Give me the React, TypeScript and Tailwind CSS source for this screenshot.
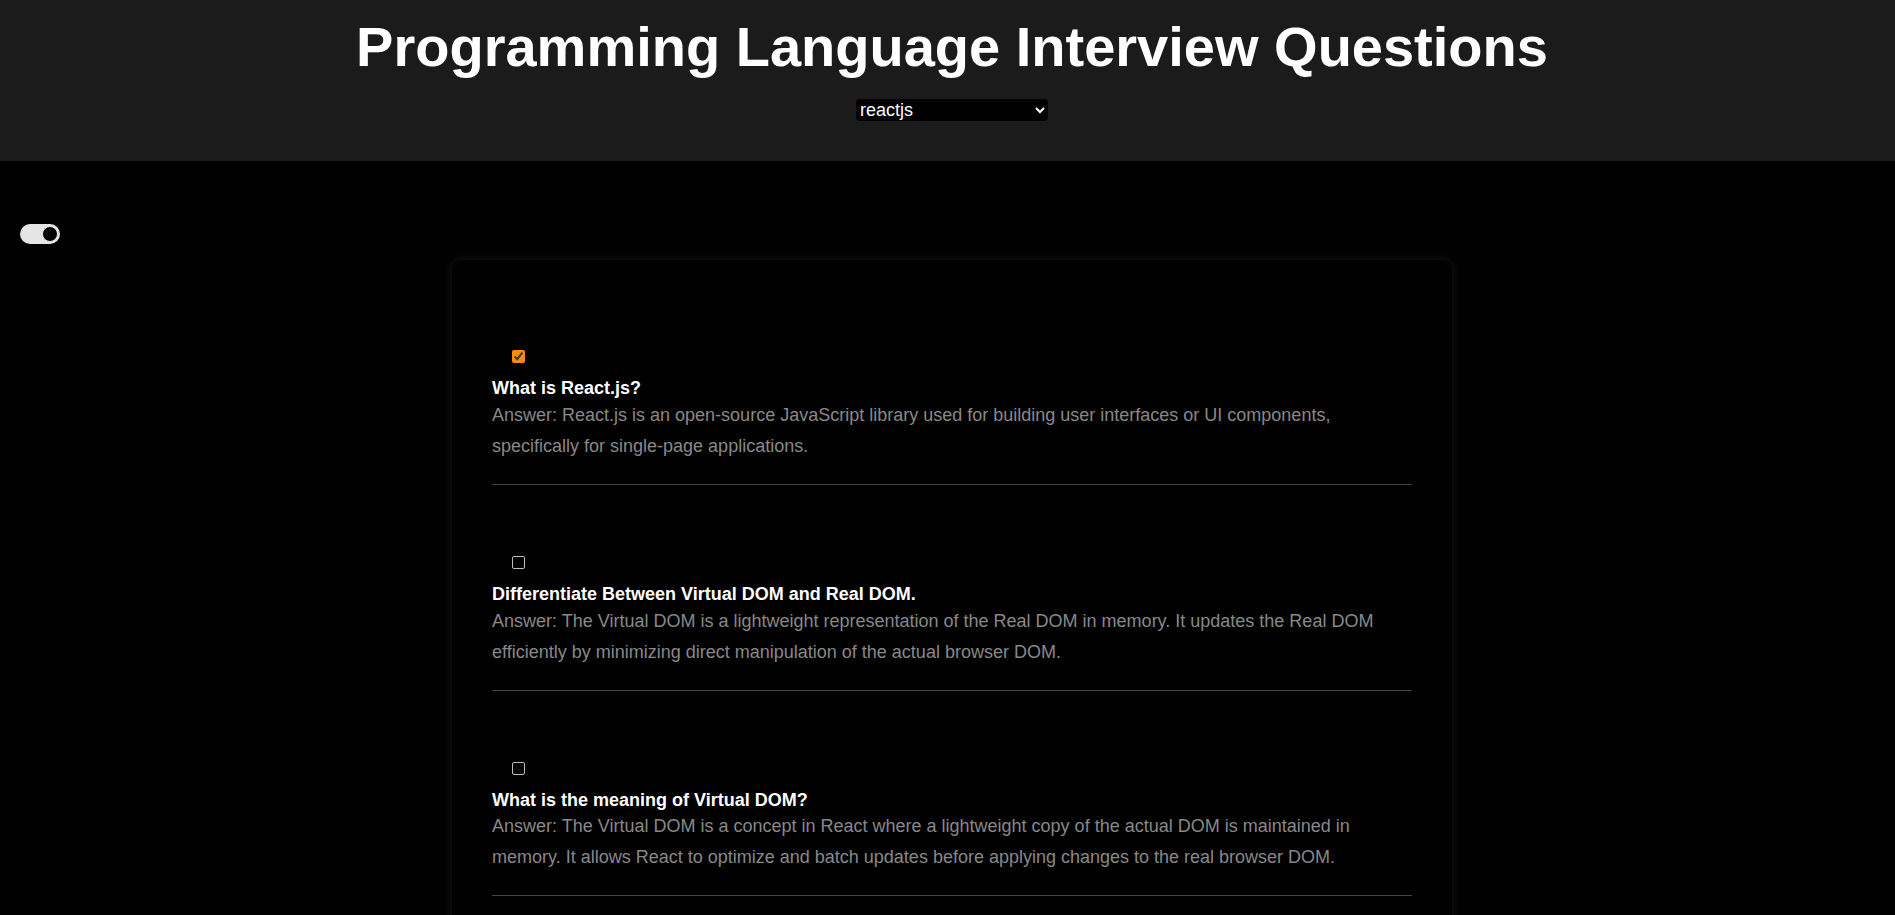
import {FC, useState} from 'react';

type Question = {
  id: number;
  question: string;
  answer: string;
};

const questions: Question[] = [
  {
    id: 1,
    question: 'What is React.js?',
    answer:
      'React.js is an open-source JavaScript library used for building user interfaces or UI components, specifically for single-page applications.',
  },
  {
    id: 2,
    question: 'Differentiate Between Virtual DOM and Real DOM.',
    answer:
      'The Virtual DOM is a lightweight representation of the Real DOM in memory. It updates the Real DOM efficiently by minimizing direct manipulation of the actual browser DOM.',
  },
  {
    id: 3,
    question: 'What is the meaning of Virtual DOM?',
    answer:
      'The Virtual DOM is a concept in React where a lightweight copy of the actual DOM is maintained in memory. It allows React to optimize and batch updates before applying changes to the real browser DOM.',
  },
  {
    id: 4,
    question: 'What are the features of React?',
    answer:
      'React uses JSX, a virtual DOM, one-way data binding and a component based architecture that makes code reusable and easy to test.',
  },
];

const App: FC = () => {
  const [language, setLanguage] = useState('reactjs');
  const [dark, setDark] = useState(true);
  const [done, setDone] = useState<number[]>([1]);

  // toggle a question as read
  const toggleDone = (id: number): void => {
    setDone(prev => (prev.includes(id) ? prev.filter(i => i !== id) : [...prev, id]));
  };

  return (
    <div className="min-h-screen bg-black font-['Liberation_Sans',Arial,sans-serif] [color-scheme:dark]">
      <header className="bg-[#1b1b1b] pt-[15px] pb-[40px] pl-[9px] flex flex-col items-center">
        <h1 className="text-white text-[56px] font-bold leading-[1.15]">
          Programming Language Interview Questions
        </h1>
        <select
          className="mt-[20px] w-[192px] h-[22px] bg-black text-white text-[18px] leading-none rounded-[4px] outline-none"
          value={language}
          onChange={e => setLanguage(e.target.value)}>
          <option value="reactjs">reactjs</option>
          <option value="javascript">javascript</option>
          <option value="python">python</option>
          <option value="java">java</option>
        </select>
      </header>

      <div className="pt-[63px] pl-[20px]">
        <button
          type="button"
          onClick={() => setDark(!dark)}
          className={`w-[40px] h-[20px] rounded-full bg-[#e5e5e5] flex items-center px-[2px] cursor-pointer ${
            dark ? 'justify-end' : 'justify-start'
          }`}>
          <span className="w-[16px] h-[16px] rounded-full bg-black border border-[#e5e5e5]" />
        </button>
      </div>

      <main className="pl-[9px] pt-[16px]">
        <div className="w-[1000px] mx-auto bg-black rounded-[10px] px-[40px] pt-[40px] shadow-[0_0_8px_2px_rgba(255,255,255,0.07)]">
          {questions.map(q => (
            <div key={q.id} className="pt-[50px] pb-[22px] mb-[21px] border-b border-[#444] flex flex-col items-start">
              <input
                type="checkbox"
                className="ml-[20px] w-[13px] h-[13px] m-0 appearance-none checked:appearance-auto border border-[#bdbdbd] rounded-[2px] bg-black accent-[#ff8c00]"
                checked={done.includes(q.id)}
                onChange={() => toggleDone(q.id)}
              />
              <h3 className="mt-[15px] text-white text-[18px] font-bold leading-[1.2]">{q.question}</h3>
              <p className="text-[#888] text-[18px] leading-[31px]">Answer: {q.answer}</p>
            </div>
          ))}
        </div>
      </main>
    </div>
  );
};

export default App;
